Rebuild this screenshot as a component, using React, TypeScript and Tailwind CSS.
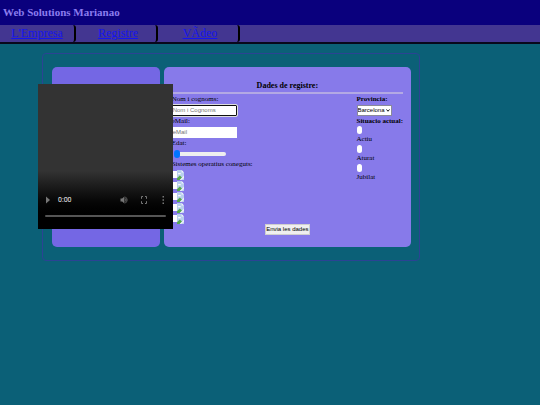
import React, { useState } from 'react';

const links = [
  { label: "L'Empresa", href: '#empresa' },
  { label: 'Registre', href: '#registre' },
  { label: 'VÃdeo', href: '#video' },
];

const systems = ['Windows', 'Linux', 'macOS', 'Android', 'iOS'];
const situations = ['Actiu', 'Aturat', 'Jubilat'];

const BrokenImage = () => (
  <svg viewBox="0 0 7 10" className="h-[10px] w-[7px]" preserveAspectRatio="none" aria-hidden="true">
    <path d="M0 0h4.6L7 2.4V10H0z" fill="#b9cfee" />
    <path d="M4.6 0v2.4H7z" fill="#f4f6fb" />
    <path d="M1 4.2c0-1 .8-1.4 1.4-1 .5-.6 1.6 0 1.4 1z" fill="#fff" />
    <path d="M0 10V8.2L2.8 5.6 5 7.4 2.6 10z" fill="#55a94b" />
    <path d="M7 5.6V8L4.2 10H2.8z" fill="#eef0f8" />
  </svg>
);

const VideoPlayer = () => (
  <div className="absolute top-[17px] -left-[14px] flex h-[145px] w-[135px] flex-col justify-end bg-linear-to-b from-[#333333] from-60% to-black to-95% px-[7px] pb-3 text-[#777777]">
    <div className="flex h-5 items-center">
      <button type="button" aria-label="Reprodueix">
        <svg viewBox="0 0 6 8" className="h-2 w-[6px]" fill="currentColor">
          <path d="M1 0.5 5 4 1 7.5z" />
        </svg>
      </button>
      <span className="ml-[7px] font-['Roboto',sans-serif] text-[7px] text-[#eeeeee]">0:00</span>
      <div className="ml-auto flex items-center gap-[13px]">
        <button type="button" aria-label="Silencia">
          <svg viewBox="0 0 8 8" className="size-2" fill="currentColor">
            <path d="M0.5 2.6h1.7L4.4 0.6v6.8L2.2 5.4H0.5z" />
            <path d="M5.2 2.4q1.6 1.6 0 3.2M5.2 0.7q3.8 3.3 0 6.6" fill="none" stroke="currentColor" strokeWidth="0.8" />
          </svg>
        </button>
        <button type="button" aria-label="Pantalla completa">
          <svg viewBox="0 0 6 8" className="h-2 w-[6px]" fill="none" stroke="currentColor">
            <path d="M0.5 2.8V0.5H2M4 0.5h1.5v2.3M5.5 5.2v2.3H4M2 7.5H0.5V5.2" />
          </svg>
        </button>
        <button type="button" aria-label="Més opcions">
          <svg viewBox="0 0 6 8" className="h-2 w-[6px]" fill="currentColor">
            <path d="M2.5 0H4v1.6H2.5zM2.5 3.2H4v1.6H2.5zM2.5 6.4H4V8H2.5z" />
          </svg>
        </button>
      </div>
    </div>
    <input
      type="range"
      aria-label="Progrés"
      defaultValue={0}
      className="mt-[5px] h-[2px] w-full appearance-none rounded-full bg-[#555555] [&::-webkit-slider-thumb]:appearance-none"
    />
  </div>
);

const RegisterForm = () => {
  const [age, setAge] = useState(0);
  const [situation, setSituation] = useState('');

  return (
    <form
      onSubmit={(e) => e.preventDefault()}
      className="flex flex-1 flex-col rounded-[5px] bg-[#877aea] px-2 py-3 text-[7px] leading-[11px]"
    >
      <h2 className="text-center text-[8px] leading-[13px] font-bold">Dades de registre:</h2>
      <hr className="h-[2px] border-0 bg-[#b3a9e4]" />

      <div className="flex justify-between">
        <div className="flex flex-col items-start">
          <label htmlFor="nom">Nom i cognoms:</label>
          <input
            id="nom"
            type="text"
            placeholder="Nom i Cognoms"
            className="h-[11px] w-[65px] rounded-[1px] border border-[#101010] bg-white font-['Liberation_Sans',sans-serif] text-[6px] outline-1 outline-[#dddddd] placeholder:text-[#757575]"
          />
          <label htmlFor="email">eMail:</label>
          <input
            id="email"
            type="email"
            placeholder="eMail"
            className="h-[11px] w-[65px] border border-white bg-white font-['Liberation_Sans',sans-serif] text-[6px] placeholder:text-[#757575]"
          />
          <label htmlFor="edat">Edat:</label>
          <input
            id="edat"
            type="range"
            value={age}
            onChange={(e) => setAge(Number(e.target.value))}
            className="my-[3px] ml-[2px] h-1 w-[52px] appearance-none rounded-full bg-[#efefef] [&::-webkit-slider-thumb]:h-2 [&::-webkit-slider-thumb]:w-[6px] [&::-webkit-slider-thumb]:appearance-none [&::-webkit-slider-thumb]:rounded-full [&::-webkit-slider-thumb]:bg-[#0075ff]"
          />
          <fieldset>
            <legend className="leading-[10px]">Sistemes operatius coneguts:</legend>
            {systems.map((system) => (
              <label key={system} className="flex h-[11px] items-center">
                <input
                  type="checkbox"
                  aria-label={system}
                  className="h-[7px] w-[5px] appearance-none bg-white checked:bg-[#0075ff]"
                />
                <BrokenImage />
              </label>
            ))}
          </fieldset>
        </div>

        <div className="flex flex-col items-start">
          <label htmlFor="provincia" className="font-bold">Provincia:</label>
          <span className="relative flex">
            <select
              id="provincia"
              className="h-[11px] w-[35px] appearance-none border border-[#8a8a9a] bg-white font-['Liberation_Sans',sans-serif] text-[6px] leading-[9px]"
            >
              <option>Barcelona</option>
              <option>Girona</option>
              <option>Lleida</option>
              <option>Tarragona</option>
            </select>
            <svg viewBox="0 0 5 4" className="pointer-events-none absolute top-1 right-[2px] h-[3px] w-1" fill="none" stroke="#111111" aria-hidden="true">
              <path d="M0.5 0.6 2.5 3 4.5 0.6" strokeWidth="1.3" />
            </svg>
          </span>
          <fieldset>
            <legend className="leading-[10px] font-bold">Situacio actual:</legend>
            {situations.map((item) => (
              <label key={item} className="flex flex-col items-start">
                <input
                  type="radio"
                  name="situacio"
                  checked={situation === item}
                  onChange={() => setSituation(item)}
                  className="h-2 w-[5px] appearance-none rounded-full bg-white checked:bg-[#0075ff]"
                />
                {item}
              </label>
            ))}
          </fieldset>
        </div>
      </div>

      <button
        type="submit"
        className="h-[11px] self-center border border-[#cfcfcf] bg-[#efefef] font-['Liberation_Sans',sans-serif] text-[6px] leading-[9px]"
      >
        Envia les dades
      </button>
    </form>
  );
};

const App = () => (
  <div className="min-h-screen bg-[#0b6077] font-['Liberation_Serif',serif] text-black">
    <header className="bg-[#0a007d] px-[3px]">
      <h1 className="text-[11px] leading-[25px] font-bold text-[#8b7cee]">Web Solutions Marianao</h1>
    </header>
    <nav className="flex border-b-2 border-[#08081c] bg-[#433691]">
      {links.map((link) => (
        <a
          key={link.label}
          href={link.href}
          className="w-[82px] rounded-r-[3px] border-r-2 border-black pl-1 text-center text-[12px] leading-[17px] text-[#1414ee] underline first:w-[76px] first:pl-0"
        >
          {link.label}
        </a>
      ))}
    </nav>
    <main className="mt-[9px] ml-[42px] flex w-[70%] gap-1 rounded-[4px] border border-[#2b4394] py-[13px] pr-2 pl-[9px]">
      <aside className="relative w-[30%] rounded-[5px] bg-[#7467e4]">
        <VideoPlayer />
      </aside>
      <RegisterForm />
    </main>
  </div>
);

export default App;
